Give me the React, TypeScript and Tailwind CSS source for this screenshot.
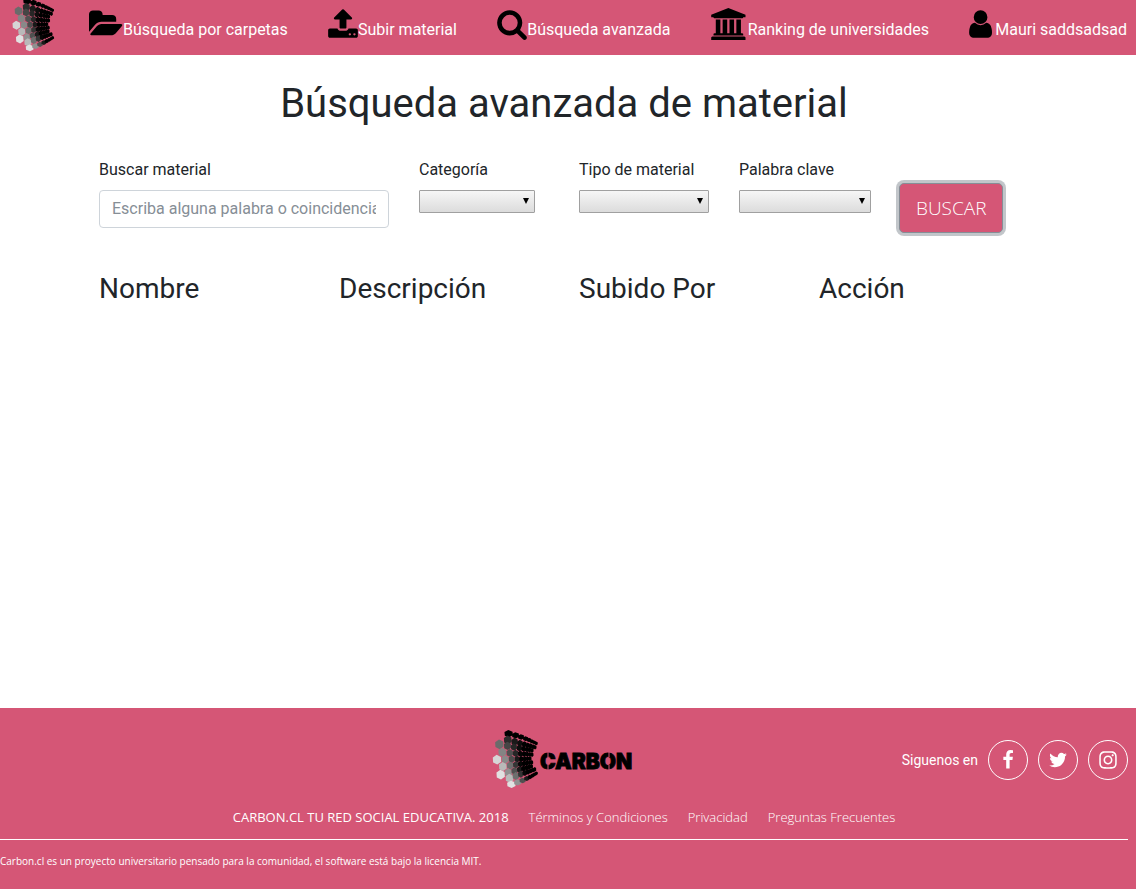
import { FaInstagram } from "react-icons/fa";
import type { ReactNode } from "react";

type Point = [number, number];

const LEFT_ARC: Point[] = [[62, 23], [34, 55], [27, 101], [38, 146], [70, 175]];
const RIGHT_ARC: Point[] = [[148, 54], [136, 74], [130, 98], [134, 120], [148, 140]];
const STEPS = [0, 0.24, 0.43, 0.59, 0.71, 0.81, 0.89, 0.96];
const HALF_STEPS = [0.12, 0.34, 0.51, 0.65, 0.76, 0.85, 0.93, 0.99];
const ROWS = [0, 0.5, 1, 1.5, 2, 2.5, 3, 3.5, 4];

function along(arc: Point[], t: number): Point {
  const i = Math.min(3, Math.floor(t));
  const f = t - i;
  return [
    arc[i][0] + (arc[i + 1][0] - arc[i][0]) * f,
    arc[i][1] + (arc[i + 1][1] - arc[i][1]) * f,
  ];
}

const CELLS = ROWS.flatMap((t) =>
  (t % 1 ? HALF_STEPS : STEPS).map((u) => {
    const a = along(LEFT_ARC, t);
    const b = along(RIGHT_ARC, t);
    const edge = t < 0.5 || t > 3.5;
    const x = a[0] + (b[0] - a[0]) * u;
    const y = a[1] + (b[1] - a[1]) * u + (edge ? (t < 1 ? -14 : 14) * u * (1 - u) : 0);
    const rx = 14 - 9 * u;
    const ry = (14.5 - 7.5 * u) * (edge ? 0.75 : 1);
    const shade = Math.max(0, Math.round(225 * Math.min(1, t / 2.1) * (1 - u * 1.5)));
    const points = [0, 1, 2, 3, 4, 5]
      .map((k) => {
        const angle = (k * Math.PI) / 3 + 0.45;
        return `${(x + rx * Math.cos(angle)).toFixed(1)},${(y + ry * Math.sin(angle)).toFixed(1)}`;
      })
      .join(" ");
    return { points, fill: `rgb(${shade},${shade},${shade})` };
  }),
);

function CarbonMark({ size }: { size: string }) {
  return (
    <svg viewBox="0 6 162 192" className={`shrink-0 ${size}`} aria-hidden="true">
      {CELLS.map((cell) => (
        <polygon key={cell.points} points={cell.points} fill={cell.fill} />
      ))}
    </svg>
  );
}

const NAV: { label: string; icon: string; viewBox: string; size: string }[] = [
  {
    label: "Búsqueda por carpetas",
    viewBox: "64 0 1920 1792",
    size: "w-[34px]",
    icon: "M1943 952q0 31-31 66l-336 396q-43 51-120.5 86.5t-143.5 35.5h-1088q-34 0-60.5-13t-26.5-43q0-31 31-66l336-396q43-51 120.5-86.5t143.5-35.5h1088q34 0 60.5 13t26.5 43zm-343-344v160h-832q-94 0-197 47.5t-164 119.5l-337 396-5 6q0-4-.5-12.5t-.5-12.5v-960q0-92 66-158t158-66h320q92 0 158 66t66 158v32h544q92 0 158 66t66 158z",
  },
  {
    label: "Subir material",
    viewBox: "64 0 1664 1792",
    size: "w-[30px]",
    icon: "M1344 1472q0-26-19-45t-45-19-45 19-19 45 19 45 45 19 45-19 19-45zm256 0q0-26-19-45t-45-19-45 19-19 45 19 45 45 19 45-19 19-45zm128-224v320q0 40-28 68t-68 28h-1472q-40 0-68-28t-28-68v-320q0-40 28-68t68-28h427q21 56 70.5 92t110.5 36h256q61 0 110.5-36t70.5-92h427q40 0 68 28t28 68zm-325-648q-17 40-59 40h-256v448q0 26-19 45t-45 19h-256q-26 0-45-19t-19-45v-448h-256q-42 0-59-40-17-39 14-69l448-448q18-19 45-19t45 19l448 448q31 30 14 69z",
  },
  {
    label: "Búsqueda avanzada",
    viewBox: "64 0 1664 1792",
    size: "w-[30px]",
    icon: "M1216 832q0-185-131.5-316.5t-316.5-131.5-316.5 131.5-131.5 316.5 131.5 316.5 316.5 131.5 316.5-131.5 131.5-316.5zm512 832q0 52-38 90t-90 38q-54 0-90-38l-343-342q-179 124-399 124-143 0-273.5-55.5t-225-150-150-225-55.5-273.5 55.5-273.5 150-225 225-150 273.5-55.5 273.5 55.5 225 150 150 225 55.5 273.5q0 220-124 399l343 343q37 37 37 90z",
  },
  {
    label: "Ranking de universidades",
    viewBox: "0 0 2048 1792",
    size: "w-[37px]",
    icon: "M960 0l960 384v128h-128q0 26-20.5 45t-48.5 19h-1526q-28 0-48.5-19t-20.5-45h-128v-128zm-704 640h256v768h128v-768h256v768h128v-768h256v768h128v-768h256v768h59q28 0 48.5 19t20.5 45v64h-1664v-64q0-26 20.5-45t48.5-19h59v-768zm1595 960q28 0 48.5 19t20.5 45v128h-1920v-128q0-26 20.5-45t48.5-19h1782z",
  },
  {
    label: "Mauri saddsadsad",
    viewBox: "256 0 1440 1792",
    size: "w-[26px]",
    icon: "M1536 1399q0 109-62.5 187t-150.5 78h-854q-88 0-150.5-78t-62.5-187q0-85 8.5-160.5t31.5-152 58.5-131 94-89 134.5-34.5q131 128 313 128t313-128q76 0 134.5 34.5t94 89 58.5 131 31.5 152 8.5 160.5zm-256-887q0 159-112.5 271.5t-271.5 112.5-271.5-112.5-112.5-271.5 112.5-271.5 271.5-112.5 271.5 112.5 112.5 271.5z",
  },
];

function Header() {
  return (
    <header className="flex h-[55px] items-start overflow-hidden bg-[#d55676] pr-[9px] pl-2">
      <a href="#inicio" aria-label="Carbon" className="-mt-1">
        <CarbonMark size="h-[59px] w-[50px]" />
      </a>
      <nav className="ml-[31px] flex flex-1 items-start justify-between pt-2">
        {NAV.map((item) => (
          <a key={item.label} href="#menu" className="flex items-start whitespace-nowrap text-white">
            <svg viewBox={item.viewBox} className={`h-8 shrink-0 fill-black ${item.size}`} aria-hidden="true">
              <path d={item.icon} />
            </svg>
            <span className="pt-2.5">{item.label}</span>
          </a>
        ))}
      </nav>
    </header>
  );
}

function Filter({ id, label, width }: { id: string; label: string; width: string }) {
  return (
    <div className="col-span-2 px-[15px]">
      <label htmlFor={id} className="mb-2 block whitespace-nowrap">{label}</label>
      <div className={`grid items-center ${width}`}>
        <select
          id={id}
          className="col-start-1 row-start-1 h-[23px] w-full appearance-none rounded-[1px] border border-[#a0a0a0] bg-linear-to-b from-[#f6f6f6] to-[#dcdcdc] px-1 text-sm"
        >
          <option value=""></option>
        </select>
        <svg viewBox="0 0 6 6" className="pointer-events-none col-start-1 row-start-1 mr-1.5 mb-[2px] size-1.5 justify-self-end" aria-hidden="true">
          <path d="M0 0h6L3 6z" />
        </svg>
      </div>
    </div>
  );
}

function SocialLink({ label, children }: { label: string; children: ReactNode }) {
  return (
    <a href="#social" aria-label={label} className="flex size-10 items-center justify-center rounded-full border border-white text-white">
      {children}
    </a>
  );
}

function Footer() {
  return (
    <footer className="bg-[#d55676] pr-2 pb-5 text-white">
      <div className="grid grid-cols-[1fr_auto_1fr] items-center pt-5">
        <a href="#inicio" aria-label="Carbon" className="col-start-2 flex items-center">
          <CarbonMark size="h-16 w-[54px]" />
          <svg viewBox="0 -4 102 32" className="-ml-1 h-8 w-[102px] overflow-visible" aria-hidden="true">
            <text x="2" y="21" fontSize="21" fontWeight="900" stroke="#000" strokeWidth=".8" className="font-['Inter',sans-serif]">CARBON</text>
            <path d="M10 4v5M10 17v5M71 4v5M71 17v5" stroke="#d55676" strokeWidth="1" />
          </svg>
        </a>
        <div className="flex items-center gap-2.5 justify-self-end">
          <span className="text-sm">Siguenos en</span>
          <SocialLink label="Facebook">
            <svg viewBox="0 0 1792 1792" className="size-5 fill-current" aria-hidden="true">
              <path d="M1343 12v264h-157q-86 0-116 36t-30 108v189h293l-39 296h-254v759h-306v-759h-255v-296h255v-218q0-186 104-288.500t277-102.500q147 0 228 12z" />
            </svg>
          </SocialLink>
          <SocialLink label="Twitter">
            <svg viewBox="0 0 1792 1792" className="size-5 fill-current" aria-hidden="true">
              <path d="M1684 408q-67 98-162 167 1 14 1 42 0 130-38 259.500t-115.500 248.500-184.500 210.500-258 146-323 54.500q-271 0-496-145 35 4 78 4 225 0 401-138-105-2-188-64.500t-114-159.500q33 5 61 5 43 0 85-11-112-23-185.500-111.500t-73.500-205.500v-4q68 38 146 41-66-44-105-115t-39-154q0-88 44-163 121 149 294.500 238.500t371.500 99.500q-8-38-8-74 0-134 94.500-228.500t228.500-94.500q140 0 236 102 109-21 205-78-37 115-142 178 93-10 186-50z" />
            </svg>
          </SocialLink>
          <SocialLink label="Instagram">
            <FaInstagram className="size-5" />
          </SocialLink>
        </div>
      </div>
      <div className="flex justify-center gap-5 border-b border-white pt-[15px] pb-3 font-['Open_Sans',sans-serif] text-[13px] leading-5">
        <span>CARBON.CL TU RED SOCIAL EDUCATIVA. 2018</span>
        <a href="#terminos" className="font-light">Términos y Condiciones</a>
        <a href="#privacidad" className="font-light">Privacidad</a>
        <a href="#preguntas" className="font-light">Preguntas Frecuentes</a>
      </div>
      <p className="pt-[13px] font-['Open_Sans',sans-serif] text-[10px] leading-4">
        Carbon.cl es un proyecto universitario pensado para la comunidad, el software está bajo la licencia MIT.
      </p>
    </footer>
  );
}

export default function App() {
  return (
    <div className="flex min-h-screen flex-col bg-white font-['Roboto',sans-serif] text-base text-[#212529]">
      <Header />
      <main className="flex-1 pt-[25px] pr-2">
        <h1 className="text-center text-[40px] leading-[48px]">Búsqueda avanzada de material</h1>
        <div className="mx-auto max-w-[960px] pt-[30px]">
          <form className="grid grid-cols-12 items-start" onSubmit={(event) => event.preventDefault()}>
            <div className="col-span-4 px-[15px]">
              <label htmlFor="buscar" className="mb-2 block">Buscar material</label>
              <input
                id="buscar"
                type="text"
                placeholder="Escriba alguna palabra o coincidencia"
                className="h-[38px] w-full rounded border border-[#ced4da] px-3 pb-0.5 placeholder:text-[#868e96]"
              />
            </div>
            <Filter id="categoria" label="Categoría" width="w-[116px]" />
            <Filter id="tipo" label="Tipo de material" width="w-[130px]" />
            <Filter id="palabra" label="Palabra clave" width="w-[132px]" />
            <div className="col-span-2 px-[15px] pt-[25px]">
              <button
                type="submit"
                className="rounded-[5px] border border-[#868e96] bg-[#d55676] px-4 py-2 font-['Open_Sans',sans-serif] text-[19px] leading-8 font-light text-white ring-3 ring-[#868e96]/50"
              >
                BUSCAR
              </button>
            </div>
          </form>
          <table className="mt-[39px] w-full table-fixed text-left text-[28px] leading-[34px]">
            <thead>
              <tr>
                <th scope="col" className="px-[15px] font-normal">Nombre</th>
                <th scope="col" className="px-[15px] font-normal">Descripción</th>
                <th scope="col" className="px-[15px] font-normal">Subido Por</th>
                <th scope="col" className="px-[15px] font-normal">Acción</th>
              </tr>
            </thead>
          </table>
        </div>
      </main>
      <Footer />
    </div>
  );
}
